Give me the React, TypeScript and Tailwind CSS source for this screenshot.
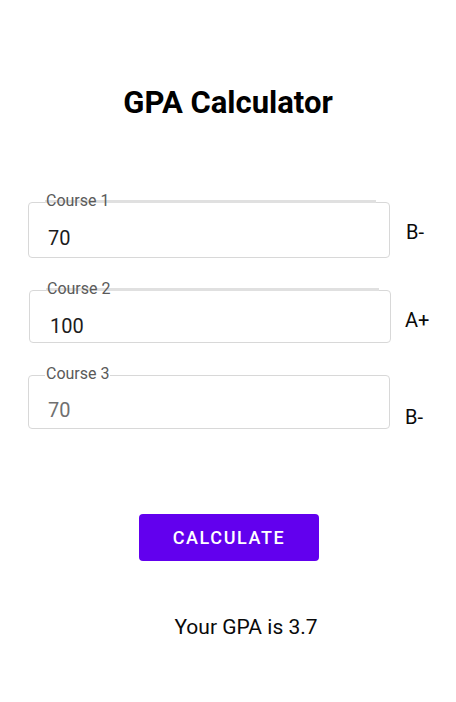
import React from "react";

type Course = {
  label: string;
  value: string;
  grade: string;
  boxClass: string;
  valueClass: string;
  gradeClass: string;
  strike?: string;
};

const courses: Course[] = [
  {
    label: "Course 1",
    value: "70",
    grade: "B-",
    boxClass: "h-[56px] ml-[28px] pt-[23px] pl-[19px]",
    valueClass: "text-[#1c1c1c]",
    gradeClass: "mt-[18px] ml-[16px]",
    strike: "left-[16px] -top-[3px] w-[331px]",
  },
  {
    label: "Course 2",
    value: "100",
    grade: "A+",
    boxClass: "h-[53px] ml-[29px] pt-[23px] pl-[20px]",
    valueClass: "text-[#1c1c1c]",
    gradeClass: "mt-[18px] ml-[14px]",
    strike: "left-[16px] -top-[3px] w-[333px]",
  },
  {
    label: "Course 3",
    value: "70",
    grade: "B-",
    boxClass: "h-[54px] ml-[28px] pt-[22px] pl-[19px]",
    valueClass: "text-[#707070]",
    gradeClass: "mt-[30px] ml-[15px]",
  },
];

function CourseRow({ course }: { course: Course }) {
  return (
    <div className="flex items-start">
      <div
        className={`relative w-[362px] rounded-[4px] border border-[#d8d8d8] ${course.boxClass}`}
      >
        {course.strike && (
          <div className={`absolute h-[3px] bg-[#e0e0e0] ${course.strike}`} />
        )}
        <span
          className={`absolute -top-[10px] left-[16px] px-[1px] text-[16px] leading-[16px] text-[#5a5a5a] ${
            course.strike ? "" : "bg-white"
          }`}
        >
          {course.label}
        </span>
        <div className={`text-[20px] leading-[24px] ${course.valueClass}`}>
          {course.value}
        </div>
      </div>
      <div className={`text-[20px] leading-[24px] text-[#0a0a0a] ${course.gradeClass}`}>
        {course.grade}
      </div>
    </div>
  );
}

export default function App() {
  return (
    <div
      className="flex min-h-screen w-full flex-col bg-white"
      style={{ fontFamily: "Roboto, 'Liberation Sans', sans-serif" }}
    >
      <h1 className="pt-[84px] text-center text-[31px] font-bold leading-[37px] text-black">
        GPA Calculator
      </h1>

      <div className="mt-[81px] flex flex-col gap-[32px]">
        {courses.map((c) => (
          <CourseRow key={c.label} course={c} />
        ))}
      </div>

      <div className="mt-[85px] flex justify-center pl-[2px]">
        <button className="flex h-[47px] w-[180px] items-center justify-center rounded-[4px] bg-[#6200ee] text-[18px] font-medium uppercase tracking-[1.6px] text-white">
          Calculate
        </button>
      </div>

      <div className="mt-[54px] pl-[36px] text-center text-[21px] leading-[24px] text-[#0a0a0a]">
        Your GPA is 3.7
      </div>
    </div>
  );
}
